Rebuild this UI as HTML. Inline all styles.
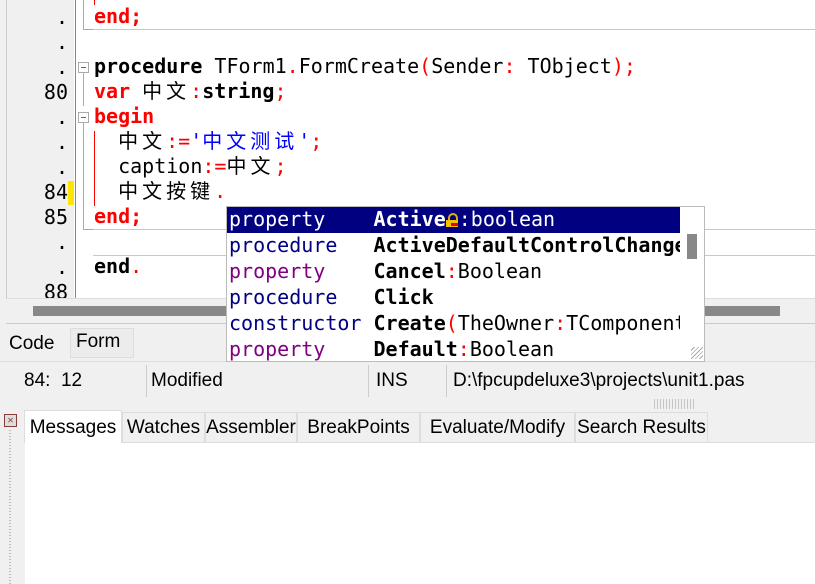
<!DOCTYPE html><html><head><style>
body{margin:0;width:815px;height:584px;overflow:hidden;background:#f0f0f0;position:relative;font-family:"DejaVu Sans Mono","Liberation Mono","Noto Sans CJK SC",monospace;}
.a{position:absolute}
.code{font-size:20px;white-space:pre;line-height:25px;height:25px}
.c{letter-spacing:4px;font-family:"Noto Sans CJK SC",sans-serif;font-size:20px;line-height:10px}
.ln{position:absolute;right:0;width:60px;text-align:right;font-size:20px;color:#000}
.k{font-weight:bold;color:#000}.r{color:#f00}.rb{color:#f00;font-weight:bold}.b{color:#00f}
.fold{position:absolute;left:78px;width:9px;height:9px;border:1px solid #aaa;background:#fff}
.fold:after{content:"";position:absolute;left:2px;top:4px;width:5px;height:1px;background:#666}
.pop .row{position:absolute;left:0;width:454px;height:26px;line-height:24px;font-size:20px;white-space:pre;padding-left:2px}
.ui{font-family:"Liberation Sans","DejaVu Sans",sans-serif;font-size:19px}
.tab{position:absolute;top:412px;height:30px;line-height:30px;border:1px solid #ddd;border-bottom:none;background:#f0f0f0;box-sizing:border-box;text-align:center}
</style></head><body>
<div class="a" style="left:6px;top:0;width:809px;height:300px;background:#fff"></div>
<div class="a" style="left:6px;top:0;width:68px;height:300px;background:#f0f0f0"></div>
<div class="a" style="left:75px;top:0;width:1px;height:300px;background:#888"></div>
<div class="a" style="left:0;top:0;width:6px;height:300px;background:#f0f0f0;border-right:1px solid #ccc"></div>
<div class="a" style="left:68px;top:181px;width:6px;height:24px;background:#ffe400"></div>
<div class="a" style="left:6px;top:0;width:62px">
<div class="ln" style="top:5px">.</div>
<div class="ln" style="top:30px">.</div>
<div class="ln" style="top:55px">.</div>
<div class="ln" style="top:80px">80</div>
<div class="ln" style="top:105px">.</div>
<div class="ln" style="top:130px">.</div>
<div class="ln" style="top:155px">.</div>
<div class="ln" style="top:180px">84</div>
<div class="ln" style="top:205px">85</div>
<div class="ln" style="top:230px">.</div>
<div class="ln" style="top:255px">.</div>
<div class="ln" style="top:280px">88</div>
</div>
<div class="a" style="left:83px;top:0;width:1px;height:30px;background:#aaa"></div>
<div class="a" style="left:83px;top:29px;width:10px;height:1px;background:#aaa"></div>
<div class="a" style="left:93px;top:29px;width:722px;height:1px;background:#c8c8c8"></div>
<div class="fold" style="top:62px"></div>
<div class="a" style="left:83px;top:73px;width:1px;height:33px;background:#aaa"></div>
<div class="fold" style="top:112px"></div>
<div class="a" style="left:83px;top:123px;width:1px;height:107px;background:#aaa"></div>
<div class="a" style="left:83px;top:229px;width:10px;height:1px;background:#aaa"></div>
<div class="a" style="left:93px;top:229px;width:722px;height:1px;background:#c8c8c8"></div>
<div class="a" style="left:93px;top:255px;width:722px;height:1px;background:#c8c8c8"></div>
<div class="a" style="left:94px;top:0;width:1px;height:5px;background:#f00"></div>
<div class="a" style="left:94px;top:131px;width:1px;height:75px;background:#f00"></div>
<div class="a code" style="left:94px;top:4px"><span class="rb">end;</span></div>
<div class="a code" style="left:94px;top:54px"><span class="k">procedure</span> TForm1<span class="r">.</span>FormCreate<span class="r">(</span>Sender<span class="r">:</span> TObject<span class="r">);</span></div>
<div class="a code" style="left:94px;top:79px"><span class="rb">var</span> <span class="c">中文</span><span class="r">:</span><span class="k">string</span><span class="r">;</span></div>
<div class="a code" style="left:94px;top:104px"><span class="rb">begin</span></div>
<div class="a code" style="left:94px;top:129px">  <span class="c">中文</span><span class="r">:=</span><span class="b">'<span class="c">中文测试</span>'</span><span class="r">;</span></div>
<div class="a code" style="left:94px;top:154px">  caption<span class="r">:=</span><span class="c">中文</span><span class="r">;</span></div>
<div class="a code" style="left:94px;top:179px">  <span class="c">中文按键</span><span class="r">.</span></div>
<div class="a code" style="left:94px;top:204px"><span class="rb">end;</span></div>
<div class="a code" style="left:94px;top:254px"><span class="k">end</span><span class="r">.</span></div>
<div class="a" style="left:6px;top:298px;width:809px;height:25px;background:#f0f0f0;border-top:1px solid #ddd"></div>
<div class="a" style="left:33px;top:306px;width:747px;height:10px;background:#888"></div>
<div class="a" style="left:6px;top:323px;width:809px;height:1px;background:#ccc"></div>
<div class="a ui" style="left:9px;top:333px">Code</div>
<div class="a ui" style="left:70px;top:328px;width:62px;height:28px;border:1px solid #ddd;background:#ececec"></div>
<div class="a ui" style="left:76px;top:331px">Form</div>
<div class="a" style="left:0;top:361px;width:815px;height:1px;background:#ddd"></div>
<div class="a ui" style="left:24px;top:370px">84:&nbsp; 12</div>
<div class="a" style="left:146px;top:365px;width:1px;height:32px;background:#ccc"></div>
<div class="a ui" style="left:151px;top:370px">Modified</div>
<div class="a" style="left:368px;top:365px;width:1px;height:32px;background:#ccc"></div>
<div class="a ui" style="left:376px;top:370px">INS</div>
<div class="a" style="left:446px;top:365px;width:1px;height:32px;background:#ccc"></div>
<div class="a ui" style="left:453px;top:370px">D:\fpcupdeluxe3\projects\unit1.pas</div>
<div class="a" style="left:654px;top:399px;width:40px;height:10px;background:repeating-linear-gradient(90deg,#aaa 0 1px,transparent 1px 3px),#f0f0f0;opacity:.6"></div>
<div class="a" style="left:4px;top:414px;width:11px;height:11px;border:1px solid #8b3a3a;background:#ddd;font-size:10px;line-height:11px;text-align:center;color:#8b3a3a">✕</div>
<div class="a" style="left:9px;top:430px;width:2px;height:154px;background:repeating-linear-gradient(#bbb 0 1px,transparent 1px 3px)"></div>
<div class="a" style="left:25px;top:442px;width:790px;height:142px;background:#fff"></div>
<div class="a" style="left:25px;top:442px;width:790px;height:1px;background:#ddd"></div>
<div class="tab ui" style="left:24px;top:410px;width:98px;height:33px;background:#fff;line-height:33px">Messages</div>
<div class="tab ui" style="left:122px;width:83px">Watches</div>
<div class="tab ui" style="left:205px;width:92px">Assembler</div>
<div class="tab ui" style="left:297px;width:123px">BreakPoints</div>
<div class="tab ui" style="left:420px;width:155px">Evaluate/Modify</div>
<div class="tab ui" style="left:575px;width:133px">Search Results</div>
<div class="a pop" style="left:226px;top:206px;width:479px;height:156px;background:#fff;border:1px solid #bbb;box-sizing:border-box;overflow:hidden">
<div class="row" style="top:0;background:#000080;color:#fff;width:451px">property    <b>Active</b><span style="display:inline-block;width:13px;height:14px;vertical-align:-1px;position:relative"><span style="position:absolute;left:2px;top:0;width:6px;height:6px;border:2px solid #e0b000;border-bottom:none;border-radius:5px 5px 0 0"></span><span style="position:absolute;left:0;top:7px;width:12px;height:7px;background:#f2c200"></span><span style="position:absolute;left:5px;top:10px;width:7px;height:3px;background:#e00"></span></span>:boolean</div>
<div class="row" style="top:26px;color:#000080">procedure   <b style="color:#000">ActiveDefaultControlChange</b></div>
<div class="row" style="top:52px;color:#800080">property    <b style="color:#000">Cancel</b><span class="r">:</span><span style="color:#000">Boolean</span></div>
<div class="row" style="top:78px;color:#000080">procedure   <b style="color:#000">Click</b></div>
<div class="row" style="top:104px;color:#000080">constructor <b style="color:#000">Create</b><span class="r">(</span><span style="color:#000">TheOwner</span><span class="r">:</span><span style="color:#000">TComponent</span></div>
<div class="row" style="top:130px;color:#800080">property    <b style="color:#000">Default</b><span class="r">:</span><span style="color:#000">Boolean</span></div>
<div class="a" style="left:453px;top:0;width:25px;height:156px;background:#fff"></div>
<div class="a" style="left:460px;top:27px;width:10px;height:25px;background:#888"></div>
<div class="a" style="left:464px;top:140px;width:12px;height:12px;background:repeating-linear-gradient(135deg,transparent 0 2px,#aaa 2px 3px)"></div>
</div>
</body></html>
